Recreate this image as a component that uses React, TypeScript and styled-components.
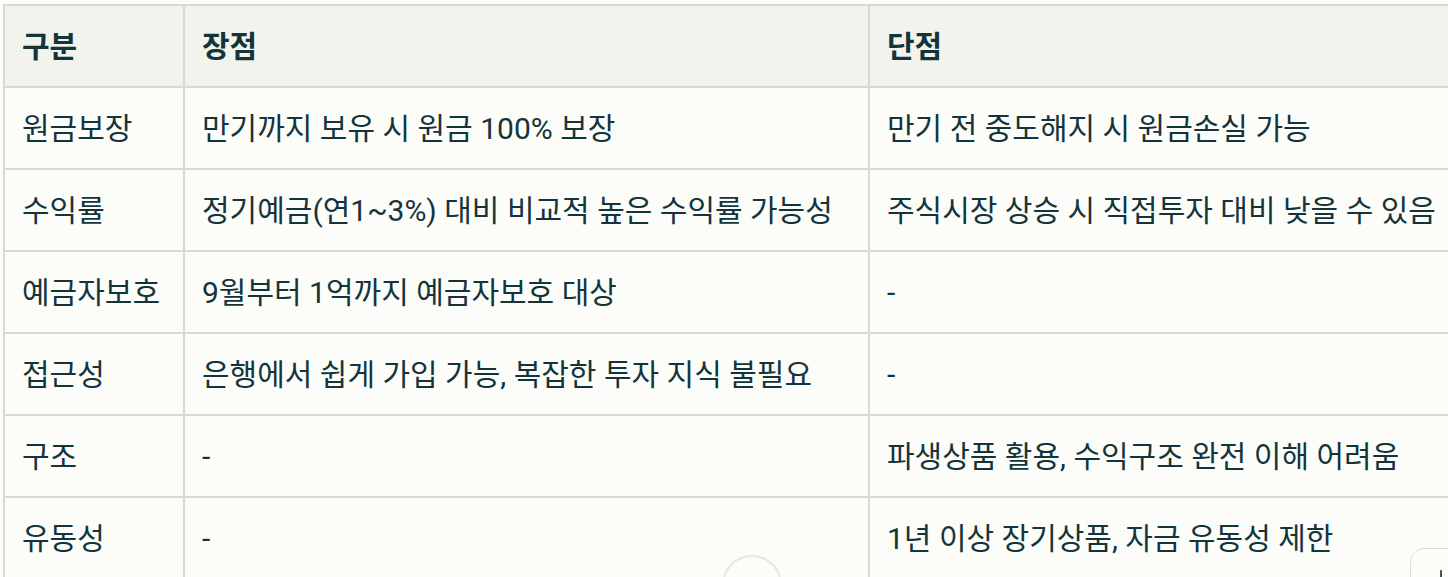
import React from 'react';
import styled, { createGlobalStyle } from 'styled-components';
import { ArrowDown, ArrowDownToLine } from 'lucide-react';

const GlobalStyle = createGlobalStyle`
  html, body {
    margin: 0;
    padding: 0;
    background: #fcfcf9;
    overflow: hidden;
  }
  body {
    font-family: Roboto, "Noto Sans CJK KR", sans-serif;
    color: #13343b;
  }
`;

type Row = { label: string; pro: string; con: string };

const rows: Row[] = [
  { label: '원금보장', pro: '만기까지 보유 시 원금 100% 보장', con: '만기 전 중도해지 시 원금손실 가능' },
  { label: '수익률', pro: '정기예금(연1~3%) 대비 비교적 높은 수익률 가능성', con: '주식시장 상승 시 직접투자 대비 낮을 수 있음' },
  { label: '예금자보호', pro: '9월부터 1억까지 예금자보호 대상', con: '-' },
  { label: '접근성', pro: '은행에서 쉽게 가입 가능, 복잡한 투자 지식 불필요', con: '-' },
  { label: '구조', pro: '-', con: '파생상품 활용, 수익구조 완전 이해 어려움' },
  { label: '유동성', pro: '-', con: '1년 이상 장기상품, 자금 유동성 제한' },
];

export default function App() {
  return (
    <>
      <GlobalStyle />
      <Page>
        <Table>
          <colgroup>
            <col style={{ width: 180 }} />
            <col style={{ width: 685 }} />
            <col style={{ width: 640 }} />
          </colgroup>
          <thead>
            <tr>
              <HeadCell>구분</HeadCell>
              <HeadCell>장점</HeadCell>
              <HeadCell>단점</HeadCell>
            </tr>
          </thead>
          <tbody>
            {rows.map(r => (
              <tr key={r.label}>
                <Cell>{r.label}</Cell>
                <Cell>{r.pro}</Cell>
                <Cell>{r.con}</Cell>
              </tr>
            ))}
          </tbody>
        </Table>
      </Page>
      <ScrollButton aria-label="scroll down">
        <ArrowDown size={20} strokeWidth={2} />
      </ScrollButton>
      <ExportButton aria-label="download">
        <ArrowDownToLine size={22} strokeWidth={1.8} />
      </ExportButton>
    </>
  );
}

const Page = styled.div`
  padding: 4px 0 0 3px;
  width: 1600px;
`;

const Table = styled.table`
  border-collapse: separate;
  border-spacing: 0;
  table-layout: fixed;
  width: 1505px;
  border-left: 2px solid #d9d9d1;
  border-top: 2px solid #d9d9d1;
`;

const Cell = styled.td`
  height: 80px;
  padding: 0 17px;
  border-right: 2px solid #d9d9d1;
  border-bottom: 2px solid #d9d9d1;
  font-size: 30px;
  font-weight: 400;
  line-height: 1.3;
  vertical-align: middle;
  white-space: nowrap;
  text-align: left;
`;

const HeadCell = styled(Cell).attrs({ as: 'th' })`
  background: #f3f3ee;
  font-weight: 700;
`;

const ScrollButton = styled.button`
  position: absolute;
  left: 722px;
  top: 555px;
  width: 60px;
  height: 60px;
  border-radius: 50%;
  border: 2px solid #e8e8e3;
  background: #fcfcf9;
  color: #13343b;
  display: flex;
  align-items: center;
  justify-content: center;
  box-shadow: 0 1px 3px rgba(0, 0, 0, 0.04);
  padding: 0;
`;

const ExportButton = styled.button`
  position: absolute;
  left: 1410px;
  top: 548px;
  width: 62px;
  height: 62px;
  border-radius: 14px;
  border: 1.5px solid #dcdcd5;
  background: #fcfcf9;
  color: #13343b;
  display: flex;
  align-items: center;
  justify-content: center;
  padding: 0;
`;
